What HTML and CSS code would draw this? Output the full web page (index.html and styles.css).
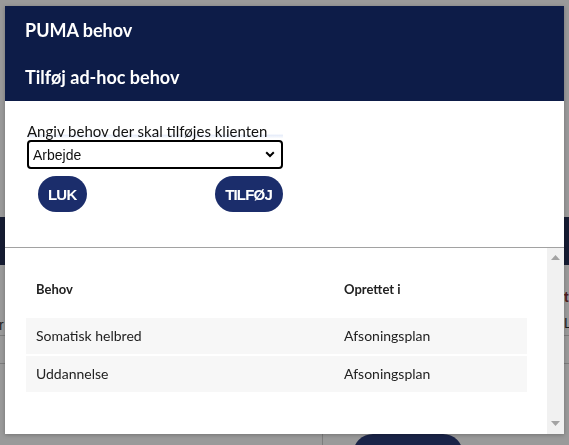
FILE: index.html
```html
<!DOCTYPE html>
<html lang="da">
<head>
<meta charset="utf-8">
<title>PUMA behov</title>
<link rel="stylesheet" href="styles.css">
</head>
<body>
<div class="page">
  <div class="bg-band"></div>
  <div class="bg-row">
    <span class="bg-left">r</span>
    <span class="bg-right"><span class="bg-red">t</span><span class="bg-l">L</span></span>
  </div>
  <div class="bg-row2"></div>
  <div class="bg-bottom">
    <div class="bg-col"></div>
    <div class="bg-btn"></div>
  </div>
</div>

<div class="overlay">
  <div class="modal">
    <div class="modal-head">PUMA behov</div>
    <div class="modal-sub">Tilføj ad-hoc behov</div>
    <div class="form">
      <label class="label" for="behov">Angiv behov der skal tilføjes klienten</label>
      <select class="select" id="behov">
        <option>Arbejde</option>
      </select>
      <div class="actions">
        <button class="btn">LUK</button>
        <button class="btn">TILFØJ</button>
      </div>
    </div>
    <div class="list">
      <div class="list-content">
        <table class="table">
          <colgroup><col class="c1"><col class="c2"></colgroup>
          <thead>
            <tr><th>Behov</th><th>Oprettet i</th></tr>
          </thead>
          <tbody>
            <tr><td>Somatisk helbred</td><td>Afsoningsplan</td></tr>
            <tr><td>Uddannelse</td><td>Afsoningsplan</td></tr>
          </tbody>
        </table>
      </div>
      <div class="scrollbar">
        <svg width="9" height="5" viewBox="0 0 9 5"><path d="M0 5 L4.5 0 L9 5 Z" fill="#a3a3a3"/></svg>
        <svg width="9" height="5" viewBox="0 0 9 5"><path d="M0 0 L4.5 5 L9 0 Z" fill="#a3a3a3"/></svg>
      </div>
    </div>
  </div>
</div>
</body>
</html>
```
FILE: styles.css
```css
html, body {
  margin: 0;
  padding: 0;
}
body {
  width: 569px;
  height: 445px;
  overflow: hidden;
  font-family: Lato, "Noto Sans", sans-serif;
}

/* dimmed background page */
.page {
  height: 445px;
  background: #9a9a9a;
  padding-top: 217px;
  box-sizing: border-box;
  overflow: hidden;
}
.bg-band {
  height: 48px;
  background: #161c33;
}
.bg-row {
  height: 70px;
  border-bottom: 1px solid #7d7d7d;
  display: flex;
  justify-content: space-between;
  font-family: "Liberation Sans", Arial, sans-serif;
  font-size: 14px;
  color: #1e1e1e;
}
.bg-left {
  margin-top: 52px;
  margin-left: -1px;
}
.bg-right {
  display: flex;
  flex-direction: column;
  width: 5px;
  overflow: hidden;
}
.bg-red {
  margin-top: 24px;
  color: #4f1d1d;
  font-weight: bold;
}
.bg-l {
  margin-top: 10px;
}
.bg-row2 {
  height: 27px;
  border-bottom: 1px solid #7d7d7d;
}
.bg-bottom {
  display: flex;
  height: 81px;
}
.bg-col {
  width: 322px;
  border-right: 1px solid #7d7d7d;
}
.bg-btn {
  margin-left: 30px;
  margin-top: 70px;
  width: 110px;
  height: 40px;
  border-radius: 20px;
  background: #1a2448;
}

/* modal */
.overlay {
  position: fixed;
  inset: 0;
  padding: 6px 5px 0 5px;
}
.modal {
  width: 559px;
  height: 428px;
  background: #fff;
  display: flex;
  flex-direction: column;
  box-shadow: 0 1px 4px rgba(0, 0, 0, 0.25);
}
.modal-head,
.modal-sub {
  background: #0d1c48;
  color: #fff;
  font-weight: bold;
  font-size: 18px;
  display: flex;
  align-items: center;
  padding-left: 20px;
}
.modal-head {
  height: 47px;
}
.modal-sub {
  height: 48px;
}

.form {
  height: 147px;
  box-sizing: border-box;
  border-bottom: 1px solid #a2a2a2;
  padding: 21px 0 0 22px;
  display: flex;
  flex-direction: column;
  align-items: flex-start;
}
.label {
  font-size: 15px;
  line-height: 18px;
  color: #111;
  width: 256px;
  white-space: nowrap;
  background: linear-gradient(to bottom, transparent 68%, rgba(205, 218, 245, 0.55) 72%, transparent 92%);
}
.select {
  appearance: none;
  -webkit-appearance: none;
  width: 256px;
  height: 29px;
  margin: 0;
  box-sizing: border-box;
  border: 2px solid #000;
  border-radius: 4px;
  background: #fff url("data:image/svg+xml,%3Csvg xmlns='http://www.w3.org/2000/svg' width='10' height='7' viewBox='0 0 10 7'%3E%3Cpath d='M1.2 1.3 L5 5 L8.8 1.3' fill='none' stroke='%23000' stroke-width='2'/%3E%3C/svg%3E") no-repeat right 6px center;
  font-family: "Liberation Sans", Arial, sans-serif;
  font-size: 14px;
  color: #111;
  padding: 0 0 0 4px;
}
.actions {
  width: 256px;
  display: flex;
  justify-content: space-between;
  padding-left: 11px;
  box-sizing: border-box;
  margin-top: 7px;
}
.btn {
  height: 36px;
  border: none;
  border-radius: 18px;
  background: #1b2d6b;
  color: #fff;
  font-family: "Liberation Sans", Arial, sans-serif;
  font-weight: bold;
  font-size: 15px;
  letter-spacing: -0.8px;
  padding: 0 11px 0 10px;
}

.list {
  flex: 1;
  display: flex;
  min-height: 0;
}
.list-content {
  flex: 1;
  padding: 19px 0 0 21px;
}
.scrollbar {
  width: 17px;
  background: #f1f1f1;
  display: flex;
  flex-direction: column;
  justify-content: space-between;
  align-items: center;
  padding: 7px 0 8px;
  box-sizing: border-box;
}
.table {
  width: 501px;
  border-collapse: separate;
  border-spacing: 0 2px;
  color: #222;
}
.c1 { width: 307px; }
.c2 { width: 194px; }
.table th {
  text-align: left;
  font-size: 13px;
  font-weight: bold;
  line-height: 16px;
  padding: 12px 10px 19px 10px;
}
.table th + th {
  padding-left: 11px;
}
.table td {
  background: #f7f7f7;
  font-size: 14px;
  line-height: 16px;
  padding: 10px 10px;
}
.table td + td {
  padding-left: 11px;
}
```
